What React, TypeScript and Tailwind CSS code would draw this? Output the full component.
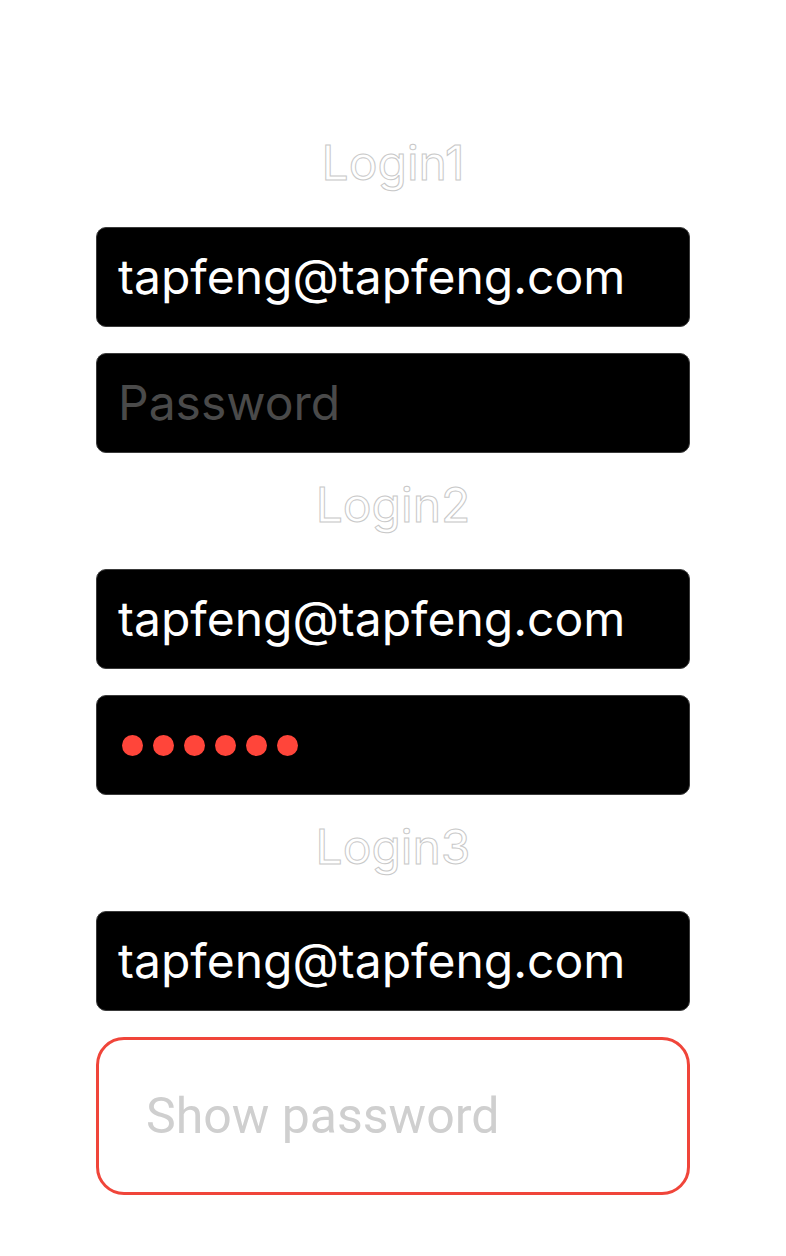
import React from 'react';

function Title({ text }: { text: string }) {
  return (
    <div className="h-[116px] flex items-center justify-center pb-[12px]">
      <span
        className="text-[48px] text-white leading-none [-webkit-text-stroke:1px_#c8c8c8]"
        style={{ fontFamily: 'Inter, sans-serif' }}
      >
        {text}
      </span>
    </div>
  );
}

function DarkField({ children }: { children: React.ReactNode }) {
  return (
    <div className="h-[100px] bg-black rounded-[10px] border border-[#3a3a3a] flex items-center px-[21px]">
      {children}
    </div>
  );
}

export default function App() {
  const font = { fontFamily: 'Inter, sans-serif' };
  return (
    <div className="min-h-[1256px] w-[786px] bg-white px-[96px] pt-[111px]">
      <Title text="Login1" />
      <div className="flex flex-col gap-[26px]">
        <DarkField>
          <span className="text-white text-[48px]" style={font}>tapfeng@tapfeng.com</span>
        </DarkField>
        <DarkField>
          <span className="text-[#4a4a4a] text-[48px]" style={font}>Password</span>
        </DarkField>
      </div>

      <Title text="Login2" />
      <div className="flex flex-col gap-[26px]">
        <DarkField>
          <span className="text-white text-[48px]" style={font}>tapfeng@tapfeng.com</span>
        </DarkField>
        <DarkField>
          <div className="flex gap-[10px] pl-[4px]">
            {[0, 1, 2, 3, 4, 5].map((i) => (
              <span key={i} className="w-[21px] h-[21px] rounded-full bg-[#ff453a]" />
            ))}
          </div>
        </DarkField>
      </div>

      <Title text="Login3" />
      <div className="flex flex-col gap-[26px]">
        <DarkField>
          <span className="text-white text-[48px]" style={font}>tapfeng@tapfeng.com</span>
        </DarkField>
        <div className="h-[158px] rounded-[28px] border-[3px] border-[#f0453a] flex items-center px-[47px]">
          <span className="text-[#cfcfcf] text-[50px]" style={{ fontFamily: 'Roboto, sans-serif' }}>
            Show password
          </span>
        </div>
      </div>
    </div>
  );
}
